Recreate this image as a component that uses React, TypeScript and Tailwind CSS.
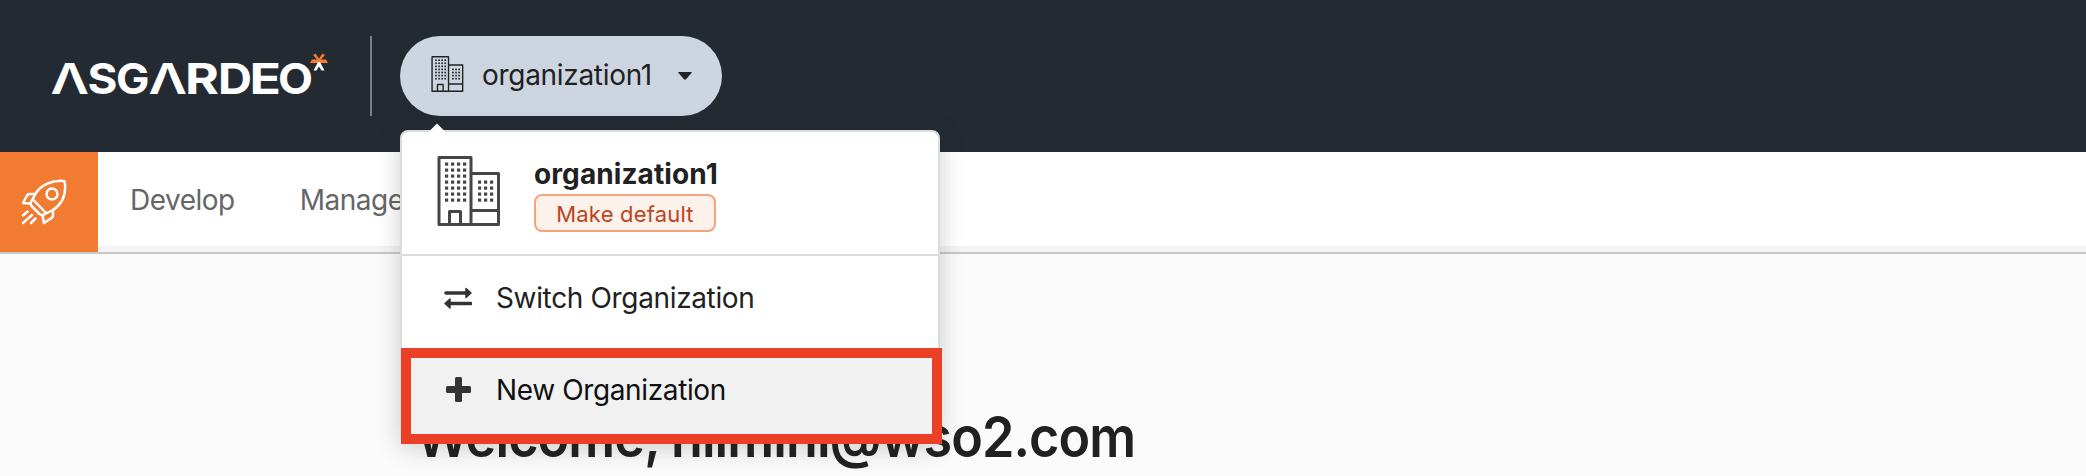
import React from "react";

const dots = (xs: number[], ys: number[], s: number) =>
  ys.flatMap((y) => xs.map((x) => <rect key={`${x}-${y}`} x={x} y={y} width={s} height={s} />));

function Buildings({ className, stroke, dot }: { className: string; stroke: number; dot: number }) {
  return (
    <svg className={className} viewBox="0 0 64 70" fill="none" stroke="currentColor" strokeWidth={stroke} strokeLinejoin="round">
      <path d="M2 1.5H34V68.5H2Z M34 17.5H61.5V68.5H34 M34 54.5H61.5 M12.5 68.5V55.5H23.5V68.5" />
      <g fill="currentColor" stroke="none">
        {dots([8, 14, 20, 26], [6.5, 12.5, 18.5, 24.5, 30.5, 36.5, 42.5], dot)}
        {dots([41, 47, 53], [24.5, 30.5, 36.5, 42.5], dot)}
      </g>
    </svg>
  );
}

const wordmark = [
  { c: "Λ", x: 50.5, w: 38.5 },
  { c: "S", x: 87.5, w: 30 },
  { c: "G", x: 116, w: 33.5 },
  { c: "Λ", x: 148.5, w: 38.5 },
  { c: "R", x: 185, w: 34 },
  { c: "D", x: 218, w: 34 },
  { c: "E", x: 249.5, w: 31.5 },
  { c: "O", x: 278, w: 35 },
];

function Logo() {
  return (
    <svg className="h-[60px] w-[290px] shrink-0" viewBox="50 44 290 60">
      <g className="fill-white font-['Inter'] text-[43px]">
        {wordmark.map((l) => (
          <text
            key={l.x}
            x={l.x}
            y="94"
            textLength={l.w}
            lengthAdjust="spacingAndGlyphs"
            className={l.c === "Λ" ? "font-semibold" : "font-bold"}
          >
            {l.c}
          </text>
        ))}
      </g>
      <path d="M310 63L312 59.500H317L313 55L315.500 53.500L319 58.500L322.500 53.500L325 55L321 59.500H326L328 63Z" fill="#f47b30" />
      <path d="M313.500 70.500L318 62H320L324.500 70.500H321.500L319 66.500L316.500 70.500Z" fill="#fff" />
    </svg>
  );
}

function Rocket() {
  return (
    <svg className="h-[46px] w-[46px]" viewBox="21 177 46 46" fill="none" stroke="#fff" strokeWidth="2.5" strokeLinecap="round" strokeLinejoin="round">
      <path d="M63.500 179C52 178 41 183 36 191L31 200Q30 202.500 32 204.500L39.500 212Q41.500 213.500 44 212.500L53 208C62 202 66.500 192 64.700 180Q64.500 179 63.500 179Z" />
      <circle cx="52" cy="192" r="5.500" />
      <path d="M33 197.500L46 211 M35 192H29.500Q28 192 27 193.500L23 201L30.500 201.500 M53 208V213.500Q53 215 51.500 216L44 221L42.500 213.500" />
      <path d="M27.500 209.500L23 213.500 M32 213L23 221 M35.500 216.500L31 221" />
    </svg>
  );
}

export default function App() {
  return (
    <div className="relative h-[476px] w-[2086px] overflow-hidden bg-[#fbfbfb] font-['Inter',sans-serif] text-[28px] leading-[40px] text-[#212121]">
      <header className="flex h-[152px] bg-[#242a32] pl-[50px]">
        <div className="flex h-[152px] w-[320px] shrink-0 items-start pt-[44px]">
          <Logo />
        </div>
        <div className="mt-9 h-20 w-0.5 bg-[#7c7f84]" />
        <button className="mt-9 ml-7 flex h-20 w-[322px] items-center rounded-full bg-[#cdd6e0] pl-[31px]">
          <Buildings className="-mt-1 h-9 w-[33px]" stroke={2.7} dot={3.2} />
          <span className="-mt-[3px] ml-[18px] w-[170px] text-left tracking-[-0.3px] whitespace-nowrap">organization1</span>
          <svg className="ml-[26px] h-2 w-[14px]" viewBox="0 0 14 8">
            <path d="M1 0H13Q14.500 0 13.500 1L8 7.300Q7 8 6 7.300L.5 1Q-.5 0 1 0Z" fill="#212121" />
          </svg>
        </button>
      </header>
      <nav className="flex h-[102px] border-b-2 border-[#c8c8c8] bg-white text-[#666]">
        <div className="flex w-[98px] items-center justify-center bg-[#f07b31] pr-[10px]">
          <Rocket />
        </div>
        <div className="flex grow gap-[65px] border-b-[6px] border-[#f4f4f4] pt-7 pl-8 tracking-[-0.5px]">
          <span>Develop</span>
          <span>Manage</span>
        </div>
      </nav>
      <h1 className="mt-[147px] ml-[416px] origin-left scale-x-[0.93] text-[56px] leading-[72px] font-semibold tracking-[-1px] whitespace-nowrap">
        Welcome, nilmini@wso2.com
      </h1>

      <div className="absolute top-[130px] left-[400px] h-[314px] w-[540px] rounded-lg border-2 border-[#dcdcdc] bg-white shadow-[0_4px_24px_rgba(34,36,38,0.22)]">
        <div className="absolute top-[-6px] left-[29px] h-3 w-3 rotate-45 bg-white" />
        <div className="flex h-[124px] border-b-2 border-[#dcdcdc] pt-6 pl-[35px]">
          <Buildings className="h-[70px] w-16 text-[#464646]" stroke={3} dot={3.2} />
          <div className="ml-[33px]">
            <div className="leading-[36px] font-bold tracking-[0.1px]">organization1</div>
            <div className="mt-0.5 flex h-[38px] w-[182px] items-center justify-center rounded-lg border-2 border-[#f7a27c] bg-[#fdf1eb] pt-0.5 text-[22px] tracking-[0.2px] text-[#bc4520]">
              Make default
            </div>
          </div>
        </div>
        <div className="flex h-[92px] items-start pt-[22px] pl-[42px]">
          <svg className="mt-[9px] h-[22px] w-[28px]" viewBox="0 0 28 22" fill="#333" stroke="#333" strokeLinejoin="round">
            <path d="M2 6H24 M26.500 16.500H4" strokeWidth="3.600" strokeLinecap="round" />
            <path d="M22 1.500L27 6L22 10.500Z M6 12L1 16.500L6 21Z" strokeWidth="1.500" />
          </svg>
          <span className="ml-[24px] tracking-[-0.35px]">Switch Organization</span>
        </div>
        <div className="absolute top-[216px] left-[-1px] flex h-24 w-[541px] border-[10px] border-[#ec4026] bg-[#f1f1f1] pt-[12px] pl-[35px] text-[#101010]">
          <svg className="mt-[7px] h-[25px] w-[25px]" viewBox="0 0 25 25" fill="#333">
            <rect x="9" width="7" height="25" rx="1.500" />
            <rect y="9" width="25" height="7" rx="1.500" />
          </svg>
          <span className="ml-[25px] tracking-[-0.37px]">New Organization</span>
        </div>
      </div>
    </div>
  );
}
